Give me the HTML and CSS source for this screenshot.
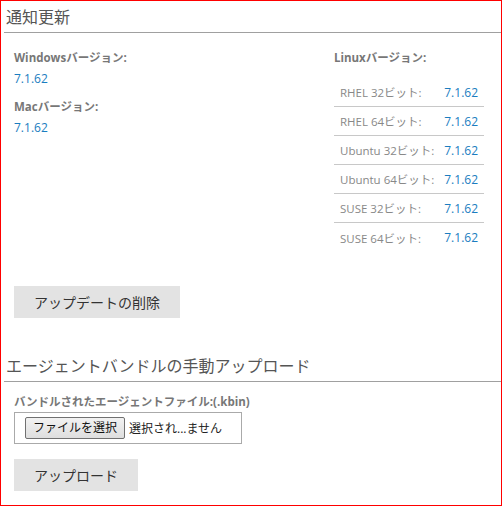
FILE: index.html
```html
<!DOCTYPE html>
<html lang="ja">
<head>
    <meta charset="UTF-8">
    <meta name="viewport" content="width=device-width, initial-scale=1.0">
    <title>通知更新</title>
    <link rel="stylesheet" href="styles.css">
</head>
<body>
    <div class="panel">
        <h2 class="section-title">通知更新</h2>

        <section class="versions">
            <div class="col-left">
                <p class="label">Windowsバージョン:</p>
                <p class="value">7.1.62</p>
                <p class="label label-gap">Macバージョン:</p>
                <p class="value">7.1.62</p>
            </div>

            <div class="col-right">
                <p class="label">Linuxバージョン:</p>
                <ul class="linux-list">
                    <li><span>RHEL 32ビット:</span><span class="ver">7.1.62</span></li>
                    <li><span>RHEL 64ビット:</span><span class="ver">7.1.62</span></li>
                    <li><span>Ubuntu 32ビット:</span><span class="ver">7.1.62</span></li>
                    <li><span>Ubuntu 64ビット:</span><span class="ver">7.1.62</span></li>
                    <li><span>SUSE 32ビット:</span><span class="ver">7.1.62</span></li>
                    <li><span>SUSE 64ビット:</span><span class="ver">7.1.62</span></li>
                </ul>
            </div>
        </section>

        <button class="btn btn-remove">アップデートの削除</button>

        <h2 class="section-title title-upload">エージェントバンドルの手動アップロード</h2>

        <div class="upload">
            <p class="label">バンドルされたエージェントファイル:(.kbin)</p>
            <label class="file-box">
                <input type="file" class="file-input" accept=".kbin">
                <span class="file-btn">ファイルを選択</span>
                <span class="file-name">選択され...ません</span>
            </label>
            <button class="btn btn-upload">アップロード</button>
        </div>
    </div>
</body>
</html>
```

FILE: styles.css
```css
* {
    box-sizing: border-box;
}
body {
    margin: 0;
    font-family: "Open Sans", "Noto Sans CJK JP", sans-serif;
    color: #555;
    background-color: #fff;
}
p {
    margin: 0;
}
.panel {
    height: 506px;
    border: 1px solid #f00;
}
.section-title {
    margin: 0 0 0 3px;
    padding: 5px 2px 4px;
    font-size: 16px;
    line-height: 22px;
    font-weight: normal;
    color: #555;
    border-bottom: 1px solid #a0a0a0;
}
.versions {
    display: flex;
    justify-content: space-between;
    padding: 17px 17px 0 13px;
}
.label {
    font-size: 11.5px;
    line-height: 16px;
    font-weight: bold;
    color: #777;
    white-space: nowrap;
}
.value {
    margin-top: 5px;
    font-size: 12px;
    line-height: 16px;
    color: #1a7dc0;
}
.label-gap {
    margin-top: 12px;
}
.col-right {
    width: 150px;
}
.linux-list {
    list-style: none;
    margin: 12px 0 0;
    padding: 0;
}
.linux-list li {
    display: flex;
    justify-content: space-between;
    align-items: center;
    height: 29px;
    padding: 0 6px;
    font-size: 11.5px;
    color: #888;
    border-bottom: 1px solid #c8c8c8;
}
.linux-list li:last-child {
    border-bottom: none;
}
.linux-list .ver {
    font-size: 12px;
    color: #1a7dc0;
}
.btn {
    display: block;
    height: 32px;
    padding: 0 20px;
    border: none;
    background-color: #e3e3e3;
    color: #333;
    font-family: inherit;
    font-size: 14px;
    cursor: pointer;
}
.btn:hover {
    background-color: #d6d6d6;
}
.btn-remove {
    margin: 34px 0 0 13px;
}
.title-upload {
    margin-top: 32px;
}
.upload {
    padding: 12px 0 0 13px;
}
.file-box {
    display: flex;
    align-items: center;
    width: 228px;
    height: 32px;
    margin-top: 2px;
    padding: 0 10px;
    border: 1px solid #aaa;
    font-size: 12px;
    color: #222;
    white-space: nowrap;
}
.file-input {
    display: none;
}
.file-btn {
    flex-shrink: 0;
    height: 22px;
    padding: 0 7px;
    line-height: 20px;
    border: 1px solid #707070;
    border-radius: 2px;
    background: linear-gradient(#f2f2f2, #dedede);
    color: #111;
}
.file-name {
    margin-left: 4px;
}
.btn-upload {
    margin-top: 15px;
}
```
